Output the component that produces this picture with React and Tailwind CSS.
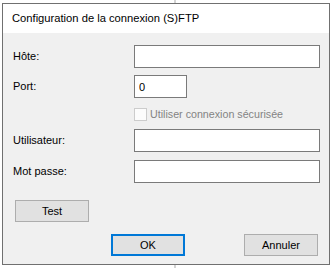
const inputCls = "h-[23px] border border-[#7a7a7a] bg-white px-[4px] text-[11px] leading-[21px] text-black outline-none";
const buttonCls = "w-[74px] h-[22px] border border-[#adadad] bg-[#e1e1e1] text-[11px] text-black";

function Row({ label, children, className = "" }) {
  return (
    <div className={`flex items-center ${className}`}>
      <div className="w-[131px] pl-[10px] text-[11px] text-black">{label}</div>
      {children}
    </div>
  );
}

export default function App() {
  return (
    <div
      className="w-[332px] h-[268px] bg-white overflow-hidden"
      style={{ fontFamily: '"Liberation Sans", Arial, sans-serif' }}
    >
      {/* window behind */}
      <div className="h-[3px]">
        <div className="ml-[174px] w-[2px] h-full bg-[#d4d4d4]" />
      </div>

      <div className="ml-[2px] w-[328px] h-[262px] border border-[#707070] flex flex-col">
        <div className="h-[29px] bg-white flex items-center pl-[9px] text-[11.2px] text-black">
          Configuration de la connexion (S)FTP
        </div>

        <div className="flex-1 bg-[#f0f0f0] flex flex-col">
          <Row label="Hôte:" className="mt-[12px]">
            <input className={`${inputCls} w-[186px]`} defaultValue="" />
          </Row>
          <Row label="Port:" className="mt-[7px]">
            <input className={`${inputCls} w-[53px]`} defaultValue="0" />
          </Row>
          <div className="mt-[10px] flex items-center pl-[131px] h-[13px]">
            <span className="w-[13px] h-[13px] border border-[#cccccc] bg-[#fcfcfc]" />
            <span className="ml-[3px] text-[10.7px] text-[#838383]">Utiliser connexion sécurisée</span>
          </div>
          <Row label="Utilisateur:" className="mt-[8px]">
            <input className={`${inputCls} w-[186px]`} defaultValue="" />
          </Row>
          <Row label="Mot passe:" className="mt-[8px]">
            <input type="password" className={`${inputCls} w-[186px]`} defaultValue="" />
          </Row>

          <div className="mt-[15px] pl-[12px]">
            <button className={buttonCls}>Test</button>
          </div>

          <div className="mt-[12px] flex">
            <button className="ml-[108px] w-[74px] h-[22px] border-2 border-[#0078d7] bg-[#e1e1e1] text-[11px] text-black">
              OK
            </button>
            <button className={`ml-[59px] ${buttonCls}`}>Annuler</button>
          </div>
        </div>
      </div>

      <div className="h-[3px]">
        <div className="ml-[174px] w-[2px] h-full bg-[#d4d4d4]" />
      </div>
    </div>
  );
}
